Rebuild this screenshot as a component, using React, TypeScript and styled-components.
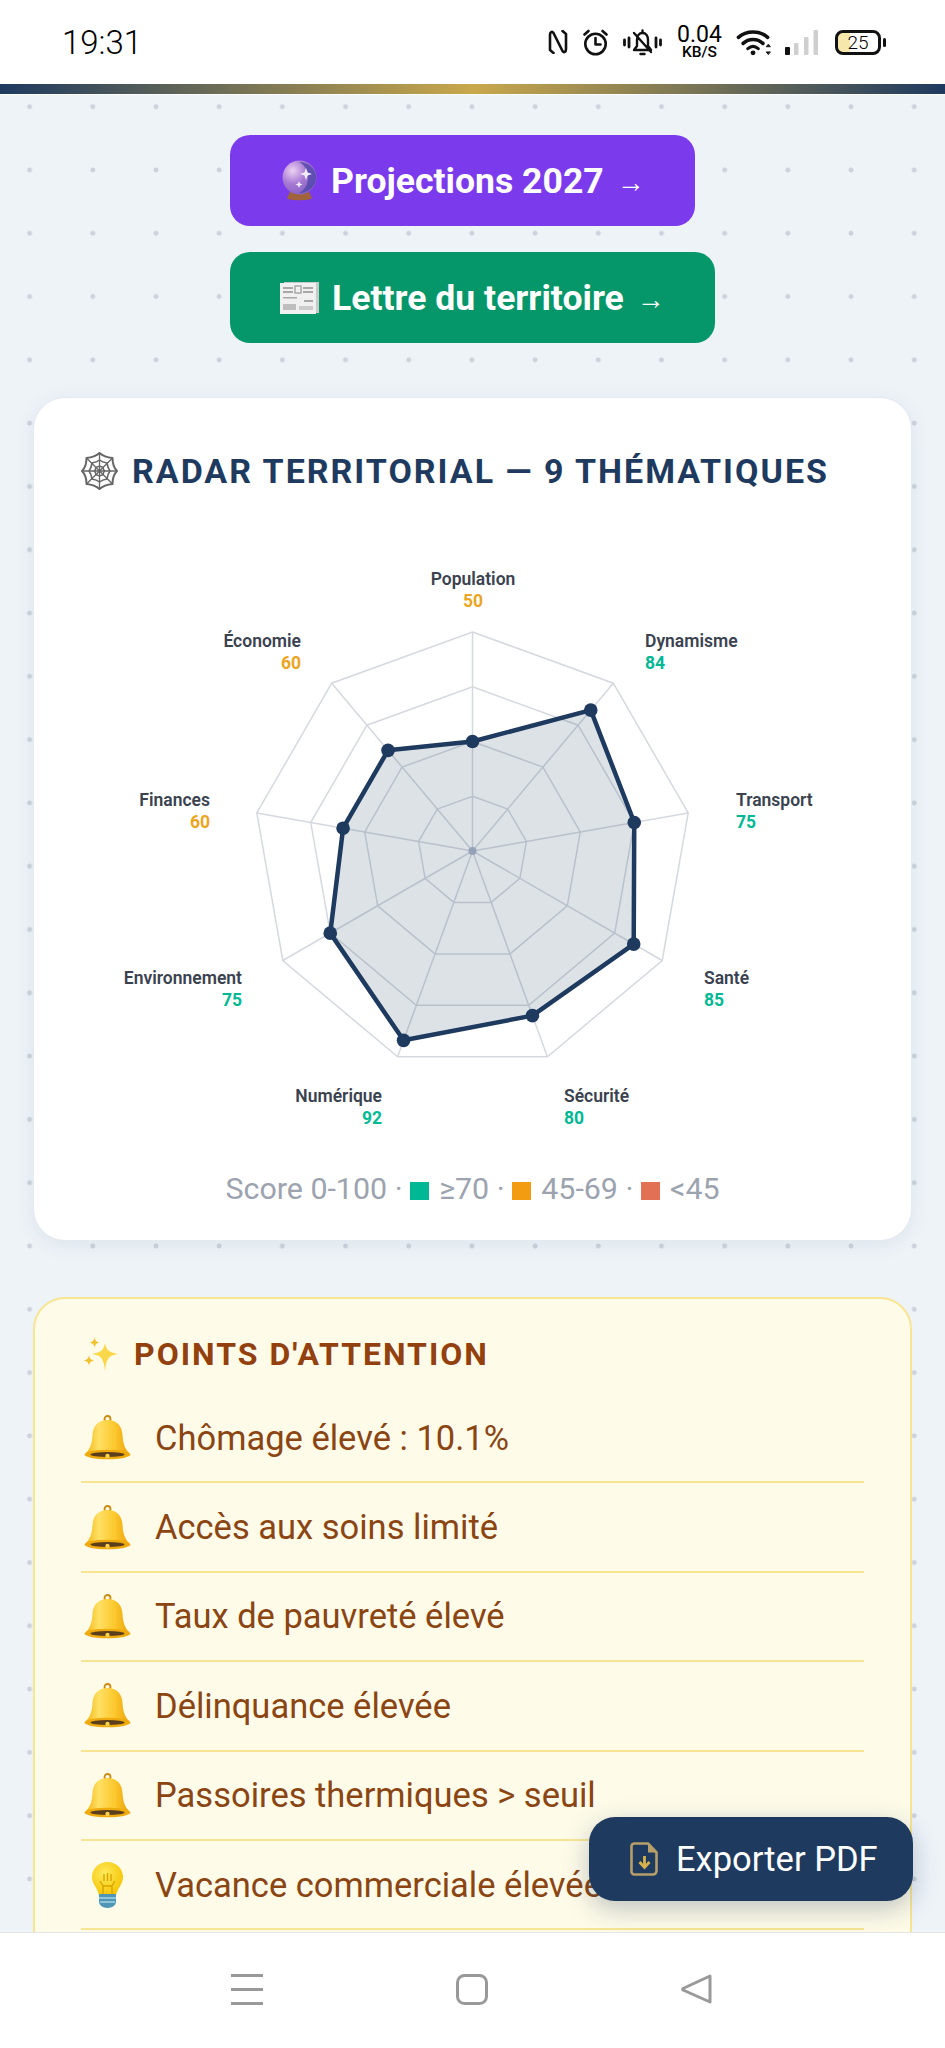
import React from 'react';
import styled, { createGlobalStyle } from 'styled-components';

const GlobalStyle = createGlobalStyle`
  html, body {
    margin: 0;
    padding: 0;
    background: #fff;
  }
  * {
    box-sizing: border-box;
  }
`;

const Phone = styled.div`
  position: relative;
  width: 945px;
  height: 2048px;
  display: flex;
  flex-direction: column;
  overflow: hidden;
  background: #fff;
  font-family: Roboto, "Liberation Sans", sans-serif;
`;

const StatusBar = styled.header`
  height: 84px;
  flex-shrink: 0;
  display: flex;
  align-items: center;
  justify-content: space-between;
  padding: 0 60px 0 62px;
  background: #fff;
  color: #000;
`;

const Clock = styled.span`
  font-size: 33px;
  font-weight: 300;
`;

const StatusIcons = styled.div`
  display: flex;
  align-items: center;
  gap: 15px;
`;

const Speed = styled.div`
  width: 45px;
  display: flex;
  flex-direction: column;
  align-items: center;
  font-size: 23px;
  line-height: 18px;
  white-space: nowrap;
  small {
    margin-top: 2px;
    font-size: 15.500px;
    line-height: 12px;
    font-weight: 500;
  }
`;

const Battery = styled.div`
  position: relative;
  width: 46px;
  height: 25px;
  margin: 0 4px 0 2px;
  border: 3px solid #111;
  border-radius: 8px;
  background: linear-gradient(90deg, #f6e7ab 30%, #fff 30%);
  display: flex;
  align-items: center;
  justify-content: center;
  font-size: 19px;
  font-weight: 300;
  &::after {
    content: '';
    position: absolute;
    right: -8px;
    top: 5px;
    width: 3px;
    height: 9px;
    border-radius: 2px;
    background: #111;
  }
`;

const GoldBar = styled.div`
  height: 10px;
  flex-shrink: 0;
  margin-bottom: 1px;
  background: linear-gradient(90deg, #1e3a5f, #c9a84c, #1e3a5f);
`;

const Content = styled.main`
  flex: 1;
  min-height: 0;
  overflow: hidden;
  padding: 40px 33px 0;
  background-color: #eef3f8;
  background-image: radial-gradient(circle, #cdd3dc 2.2px, transparent 2.8px);
  background-size: 63.2px 63.3px;
  background-position: -2px -20px;
`;

const Actions = styled.div`
  display: flex;
  flex-direction: column;
  align-items: flex-start;
  gap: 26px;
  padding-left: 197px;
`;

const ActionButton = styled.a<{ $bg: string }>`
  height: 91px;
  display: inline-flex;
  align-items: center;
  padding: 0 50px;
  border-radius: 20px;
  background: ${(p) => p.$bg};
  color: #fff;
  font-size: 35.600px;
  font-weight: 700;
`;

const ActionIcon = styled.span<{ $left: number; $right: number }>`
  display: flex;
  flex-shrink: 0;
  margin: 0 ${(p) => p.$right}px 0 ${(p) => p.$left}px;
`;

const Arrow = styled.span`
  margin-left: 13px;
  font-size: 28px;
  font-weight: 700;
  position: relative;
  top: 2px;
`;

const RadarCard = styled.section`
  margin-top: 54px;
  height: 844px;
  padding: 46px 44px 0;
  background: #fff;
  border: 1px solid #e5eaf0;
  border-radius: 32px;
  box-shadow: 0 4px 20px rgba(30, 58, 95, 0.08);
`;

const CardTitle = styled.h2`
  margin: 0;
  height: 54px;
  display: flex;
  align-items: center;
  gap: 14px;
  margin-left: 3px;
  font-size: 34px;
  font-weight: 700;
  letter-spacing: 2px;
  color: #1e3a5f;
`;

const Chart = styled.svg`
  display: block;
  margin-top: 42px;
`;

const AxisName = styled.text`
  font-size: 17.500px;
  font-weight: 600;
  fill: #3a4250;
`;

const AxisScore = styled.text`
  font-size: 17.500px;
  font-weight: 700;
`;

const Legend = styled.div`
  margin-top: 9px;
  height: 40px;
  display: flex;
  align-items: center;
  justify-content: center;
  font-size: 30.400px;
  line-height: 40px;
  color: #9ca3af;
  white-space: pre;
`;

const Swatch = styled.span<{ $color: string }>`
  display: inline-block;
  width: 19px;
  height: 18px;
  margin: 3px 10px 0 0;
  background: ${(p) => p.$color};
`;

const AttentionCard = styled.section`
  margin-top: 56px;
  padding: 28px 46px 60px;
  background: #fefbe8;
  border: 2.500px solid #f8e594;
  border-radius: 32px;
`;

const AttentionTitle = styled.h3`
  margin: 0 0 13px;
  height: 54px;
  display: flex;
  align-items: center;
  gap: 15px;
  margin-left: 2px;
  font-size: 32px;
  font-weight: 700;
  letter-spacing: 2px;
  color: #92400e;
`;

const AttentionRow = styled.div`
  height: 89.400px;
  display: flex;
  align-items: center;
  border-bottom: 2.500px solid #f8e594;
  font-size: 34.500px;
  color: #8a4513;
  white-space: nowrap;
`;

const RowIcon = styled.span`
  width: 74px;
  padding: 0 23px 0 2px;
  display: flex;
  justify-content: center;
  flex-shrink: 0;
`;

const ExportButton = styled.button`
  position: absolute;
  right: 32px;
  bottom: 147px;
  width: 324px;
  height: 84px;
  display: flex;
  align-items: center;
  gap: 18px;
  padding: 0 0 0 41px;
  border: 0;
  border-radius: 26px;
  background: #1e3a5f;
  color: #fff;
  font-family: inherit;
  font-size: 34.500px;
  font-weight: 400;
  box-shadow: 0 8px 26px rgba(30, 58, 95, 0.28);
`;

const NavBar = styled.nav`
  height: 116px;
  flex-shrink: 0;
  display: flex;
  align-items: flex-start;
  padding: 41px 0 0 230px;
  gap: 193px;
  background: #fff;
  border-top: 1px solid #e6e6e6;
`;

const axes = [
  { name: 'Population', score: 50, x: 395, y: 45, anchor: 'middle' },
  { name: 'Dynamisme', score: 84, x: 567, y: 107, anchor: 'start' },
  { name: 'Transport', score: 75, x: 658, y: 265.5, anchor: 'start' },
  { name: 'Santé', score: 85, x: 626, y: 444, anchor: 'start' },
  { name: 'Sécurité', score: 80, x: 486, y: 562, anchor: 'start' },
  { name: 'Numérique', score: 92, x: 304, y: 562, anchor: 'end' },
  { name: 'Environnement', score: 75, x: 164, y: 444, anchor: 'end' },
  { name: 'Finances', score: 60, x: 132, y: 265.5, anchor: 'end' },
  { name: 'Économie', score: 60, x: 223, y: 107, anchor: 'end' },
] as const;

const CX = 394.5;
const CY = 311;
const R = 219;

const polar = (i: number, r: number) => {
  const a = (i * 2 * Math.PI) / axes.length;
  return [CX + r * Math.sin(a), CY - r * Math.cos(a)];
};

const ring = (k: number) =>
  axes.map((_, i) => polar(i, R * k).map((v) => v.toFixed(1)).join(',')).join(' ');

const scoreColor = (s: number) => (s >= 70 ? '#00b894' : s >= 45 ? '#eba51f' : '#e17055');

const Radar = () => {
  const data = axes.map((a, i) => polar(i, (R * a.score) / 100));
  return (
    <Chart width="788" height="620" viewBox="0 0 788 620">
      {[0.25, 0.5, 0.75, 1].map((k) => (
        <polygon key={k} points={ring(k)} fill="none" stroke="#d5d9df" strokeWidth="1.5" />
      ))}
      {axes.map((a, i) => {
        const [x, y] = polar(i, R);
        return <line key={a.name} x1={CX} y1={CY} x2={x} y2={y} stroke="#d5d9df" strokeWidth="1.5" />;
      })}
      <polygon
        points={data.map((p) => p.join(',')).join(' ')}
        fill="rgba(30,58,95,0.15)"
        stroke="#1e3a5f"
        strokeWidth="4.5"
        strokeLinejoin="round"
      />
      {data.map((p, i) => (
        <circle key={i} cx={p[0]} cy={p[1]} r="6.8" fill="#1e3a5f" />
      ))}
      <circle cx={CX} cy={CY} r="4" fill="#94a3b8" />
      {axes.map((a) => (
        <g key={a.name} textAnchor={a.anchor}>
          <AxisName x={a.x} y={a.y}>{a.name}</AxisName>
          <AxisScore x={a.x} y={a.y + 22} fill={scoreColor(a.score)}>{a.score}</AxisScore>
        </g>
      ))}
    </Chart>
  );
};

const NfcIcon = () => (
  <svg width="20" height="24" viewBox="0 0 20 24" fill="none" stroke="#111" strokeWidth="2.6" strokeLinecap="round" strokeLinejoin="round">
    <path d="M5.500 23 2 20V5C2 2 4 1 5.500 3l9 18c1.500 2 3.500 1 3.500-2V4l-3.500-3" />
  </svg>
);

const AlarmIcon = () => (
  <svg width="25" height="27" viewBox="0 0 25 27" fill="none" stroke="#111" strokeWidth="2.6" strokeLinecap="round" strokeLinejoin="round">
    <circle cx="12.500" cy="15" r="10.200" />
    <path d="M12.500 9v6.500h5M1.500 5.500 5.500 2M23.500 5.500 19.500 2" />
  </svg>
);

const MuteIcon = () => (
  <svg width="39" height="27" viewBox="0 0 39 27" fill="none" stroke="#111" strokeWidth="2.4" strokeLinecap="round" strokeLinejoin="round">
    <path d="M1.500 11v5M6 9v9M33 9v9M37.500 11v5" strokeWidth="2.800" />
    <path d="M11 21h17l-3-4v-6c0-4-2-7-5.500-7S14 7 14 11v6zM19.500 1.500V4M17.500 25h4M11 4l17 19" />
  </svg>
);

const WifiIcon = () => (
  <svg width="33" height="27" viewBox="0 0 35 27" fill="none" stroke="#111" strokeLinecap="round" style={{ overflow: 'visible' }}>
    <path d="M1.500 8C10 .5 24 .5 32.500 8" strokeWidth="3.800" />
    <path d="M6.500 14.500c6-5.500 15-5.500 21 0" strokeWidth="3.800" />
    <path d="M11.500 20c3.500-3 7.500-3 11 0" strokeWidth="3.400" />
    <circle cx="17" cy="24.500" r="2.600" fill="#111" stroke="none" />
    <path d="M33 15.500l-2 2.500h4zM33 26l-2-2.500h4z" fill="#111" stroke="#111" strokeWidth="1" />
  </svg>
);

const SignalIcon = () => (
  <svg width="33" height="27" viewBox="0 0 33 27" fill="#cfcfcf">
    <rect x="0" y="18" width="5" height="8" rx="1" fill="#111" />
    <rect x="9" y="14" width="4.500" height="12" rx="1" />
    <rect x="19" y="8" width="4.500" height="18" rx="1" />
    <rect x="28.500" y="1" width="4.500" height="25" rx="1" />
  </svg>
);

const CrystalBall = () => (
  <svg width="35" height="42" viewBox="0 0 35 42">
    <defs>
      <radialGradient id="ball" cx="0.3" cy="0.3" r="0.85">
        <stop offset="0" stopColor="#ecd2f2" />
        <stop offset="0.45" stopColor="#a87ad4" />
        <stop offset="1" stopColor="#7a58c0" />
      </radialGradient>
    </defs>
    <path d="M8 32h19l3 6c-1 3-24 3-25 0z" fill="#a0633a" />
    <circle cx="17.500" cy="17.500" r="17" fill="url(#ball)" />
    <path d="M17 2c9 0 17 6.500 17 15.500S26 33 17 33c6-3 9-9 9-15.500S23 5 17 2z" fill="#4c46a8" opacity="0.75" />
    <path d="M24 8l1.600 4.400L30 14l-4.400 1.600L24 20l-1.600-4.400L18 14l4.400-1.600zM17 21l1 2.600 2.500 1-2.500 1-1 2.500-1-2.500-2.600-1 2.600-1z" fill="#f0ecff" />
  </svg>
);

const Newspaper = () => (
  <svg width="39" height="32" viewBox="0 0 39 32">
    <rect x="4" y="0" width="35" height="31" fill="#c9c9c9" />
    <rect x="0" y="1" width="36" height="31" fill="#f0f0f0" />
    <g fill="#a8a8a8">
      <rect x="3" y="5" width="10" height="2" />
      <rect x="3" y="9" width="10" height="2" />
      <rect x="23" y="5" width="10" height="2" />
      <rect x="23" y="9" width="10" height="2" />
      <rect x="15" y="4" width="6" height="7" fill="none" stroke="#a8a8a8" strokeWidth="1.500" />
      <rect x="3" y="15" width="14" height="1.500" />
      <rect x="24" y="18" width="9" height="2" />
      <rect x="3" y="22" width="13" height="6" opacity="0.7" />
      <rect x="19" y="24" width="14" height="4" opacity="0.5" />
    </g>
  </svg>
);

const WebIcon = () => (
  <svg width="37" height="38" viewBox="0 0 37 38" fill="none" stroke="#666" strokeWidth="1.600" strokeLinejoin="round">
    <path d="M18.500 1c4 3.500 8 4.500 13 5 0 5 1 9.500 4.500 13-3.500 3.500-4.500 8-4.500 13-5 .5-9 1.500-13 5-4-3.500-8-4.500-13-5 0-5-1-9.500-4.500-13C4.500 15.500 5.500 11 5.500 6c5-.5 9-1.500 13-5z" strokeWidth="2" />
    <path d="M18.500 8c2.500 2 4.500 2.500 7.500 3 .5 3 1 5.500 3 8-2 2.500-2.500 5-3 8-3 .5-5 1-7.500 3-2.500-2-4.500-2.500-7.500-3-.5-3-1-5.500-3-8 2-2.500 2.500-5 3-8 3-.5 5-1 7.500-3z" />
    <path d="M18.500 14c1 .8 2 1 3.500 1.300.3 1.500.5 2.500 1.500 3.700-1 1.200-1.200 2.200-1.500 3.700-1.500.3-2.500.5-3.500 1.300-1-.8-2-1-3.500-1.300-.3-1.500-.5-2.500-1.500-3.700 1-1.200 1.200-2.200 1.500-3.700 1.500-.3 2.500-.5 3.500-1.300z" />
    <path d="M18.500 1v36M1 19h35M5.500 6l26 26M31.500 6l-26 26" strokeWidth="1.300" />
  </svg>
);

const Sparkles = () => (
  <svg width="36" height="34" viewBox="0 0 36 34" fill="#f8d84a">
    <path d="M22 6c1.200 6.500 3.500 9.500 13 11-9.500 1.500-11.800 5-13 17-1.200-12-3.500-15.500-13-17 9.500-1.500 11.800-4.500 13-11z" />
    <path d="M11.500 0c.6 3.500 1.500 4.500 4.500 5.500-3 1-3.900 2-4.500 5.500-.6-3.500-1.500-4.500-4.500-5.500 3-1 3.900-2 4.500-5.500z" fill="#f2c230" />
    <path d="M6 18c.6 3.500 1.500 4.500 5 5.500-3.500 1-4.400 2-5 5.500-.6-3.500-1.500-4.500-5-5.500 3.500-1 4.400-2 5-5.500z" fill="#f2c230" />
  </svg>
);

const Bell = () => (
  <svg width="47" height="45" viewBox="0 0 47 45" style={{ flexShrink: 0 }}>
    <defs>
      <linearGradient id="bell" x1="0" x2="1" y1="0" y2="0">
        <stop offset="0" stopColor="#f5b510" />
        <stop offset="0.3" stopColor="#ffe066" />
        <stop offset="0.65" stopColor="#fdc92f" />
        <stop offset="1" stopColor="#eca20a" />
      </linearGradient>
    </defs>
    <circle cx="23.500" cy="4" r="3" fill="none" stroke="#c98a10" strokeWidth="1.800" />
    <path d="M23.500 5C13 5 9 12 8.500 20 8 29 6 34 1.500 38.500h44C41 34 39 29 38.500 20 38 12 34 5 23.500 5z" fill="url(#bell)" />
    <ellipse cx="23.500" cy="39.500" rx="23" ry="4.800" fill="#efaa0e" />
    <ellipse cx="23.500" cy="39.500" rx="17" ry="2.600" fill="#5b3f1d" />
    <circle cx="23.500" cy="41" r="2.200" fill="#fbd34d" />
  </svg>
);

const Bulb = () => (
  <svg width="31" height="46" viewBox="0 0 31 46" style={{ flexShrink: 0 }}>
    <defs>
      <radialGradient id="bulb" cx="0.4" cy="0.35" r="0.7">
        <stop offset="0" stopColor="#ffe95c" />
        <stop offset="1" stopColor="#f5c400" />
      </radialGradient>
    </defs>
    <path d="M15.500 0C7 0 0 6.500 0 15c0 7 5 10 7 18h17c2-8 7-11 7-18C31 6.500 24 0 15.500 0z" fill="url(#bulb)" />
    <path d="M11 33V24l-3-5M20 33V24l3-5M11 24h9M12 12v7M15.500 11v8M19 12v7" stroke="#d9a400" strokeWidth="1.400" fill="none" />
    <path d="M7 32h17v8c0 3-4 6-8.500 6S7 43 7 40z" fill="#4f95b5" />
    <path d="M7 36h17M8 40h15" stroke="#a6d3e3" strokeWidth="1.500" />
  </svg>
);

const FileIcon = () => (
  <svg width="28" height="34" viewBox="0 0 28 34" style={{ flexShrink: 0 }}>
    <path d="M4 1.500h14l8.500 9V29a3.500 3.500 0 0 1-3.500 3.500H4A3 3 0 0 1 1.500 29V4.500A3 3 0 0 1 4 1.500z" fill="none" stroke="#b79f6b" strokeWidth="2.600" strokeLinejoin="round" />
    <path d="M18 2v8.500h8z" fill="#b79f6b" />
    <path d="M14.500 14v10M9.500 20l5 5.500 5-5.500" fill="none" stroke="#d6b14c" strokeWidth="2.800" />
  </svg>
);

const MenuIcon = () => (
  <svg width="33" height="31" viewBox="0 0 33 31" stroke="#999" strokeWidth="3">
    <path d="M1 1.500h32M1 15.500h32M1 29.500h32" />
  </svg>
);

const HomeIcon = () => (
  <svg width="32" height="31" viewBox="0 0 32 31" fill="none" stroke="#999" strokeWidth="3">
    <rect x="1.500" y="1.500" width="29" height="28" rx="7" />
  </svg>
);

const BackIcon = () => (
  <svg width="31" height="30" viewBox="0 0 31 30" fill="none" stroke="#999" strokeWidth="3" strokeLinejoin="round">
    <path d="M29 2 2 14.500a1 1 0 0 0 0 1.500L29 28z" />
  </svg>
);

const alerts = [
  { text: 'Chômage élevé : 10.1%', icon: <Bell /> },
  { text: 'Accès aux soins limité', icon: <Bell /> },
  { text: 'Taux de pauvreté élevé', icon: <Bell /> },
  { text: 'Délinquance élevée', icon: <Bell /> },
  { text: 'Passoires thermiques > seuil', icon: <Bell /> },
  { text: 'Vacance commerciale élevée', icon: <Bulb /> },
];

const App: React.FC = () => (
  <Phone>
    <GlobalStyle />
    <StatusBar>
      <Clock>19:31</Clock>
      <StatusIcons>
        <NfcIcon />
        <AlarmIcon />
        <MuteIcon />
        <Speed>
          0.04
          <small>KB/S</small>
        </Speed>
        <WifiIcon />
        <SignalIcon />
        <Battery>25</Battery>
      </StatusIcons>
    </StatusBar>
    <GoldBar />
    <Content>
      <Actions>
        <ActionButton $bg="#7c3aed">
          <ActionIcon $left={2} $right={14}>
            <CrystalBall />
          </ActionIcon>
          Projections 2027<Arrow>→</Arrow>
        </ActionButton>
        <ActionButton $bg="#059669">
          <ActionIcon $left={0} $right={13}>
            <Newspaper />
          </ActionIcon>
          Lettre du territoire<Arrow>→</Arrow>
        </ActionButton>
      </Actions>
      <RadarCard>
        <CardTitle>
          <WebIcon />
          RADAR TERRITORIAL — 9 THÉMATIQUES
        </CardTitle>
        <Radar />
        <Legend>
          {'Score 0-100 · '}
          <Swatch $color="#00b894" />
          {'≥70 · '}
          <Swatch $color="#f39c12" />
          {'45-69 · '}
          <Swatch $color="#e17055" />
          {'<45'}
        </Legend>
      </RadarCard>
      <AttentionCard>
        <AttentionTitle>
          <Sparkles />
          POINTS D'ATTENTION
        </AttentionTitle>
        {alerts.map((a) => (
          <AttentionRow key={a.text}>
            <RowIcon>{a.icon}</RowIcon>
            {a.text}
          </AttentionRow>
        ))}
      </AttentionCard>
    </Content>
    <ExportButton>
      <FileIcon />
      Exporter PDF
    </ExportButton>
    <NavBar>
      <MenuIcon />
      <HomeIcon />
      <BackIcon />
    </NavBar>
  </Phone>
);

export default App;
